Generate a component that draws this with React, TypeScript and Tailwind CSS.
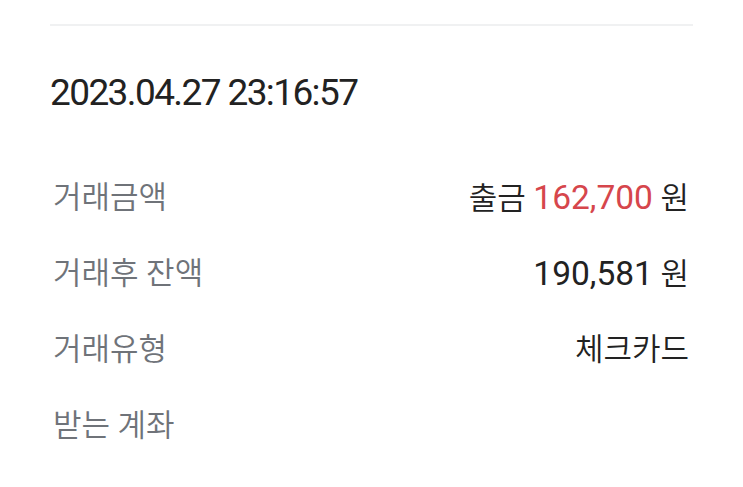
import React from "react";

const Num = ({ children, red }: { children: React.ReactNode; red?: boolean }) => (
  <span className={`font-normal text-[33.5px] ${red ? "text-[#d6464c]" : ""}`}>{children}</span>
);

const rows: { label: string; value: React.ReactNode }[] = [
  {
    label: "거래금액",
    value: (
      <>
        출금 <Num red>162,700</Num> 원
      </>
    ),
  },
  {
    label: "거래후 잔액",
    value: (
      <>
        <Num>190,581</Num> 원
      </>
    ),
  },
  { label: "거래유형", value: <>체크카드</> },
  { label: "받는 계좌", value: null },
];

export default function App() {
  return (
    <div
      className="w-[743px] h-[487px] bg-white overflow-hidden"
      style={{ fontFamily: "Roboto, 'Noto Sans CJK KR', sans-serif" }}
    >
      <div className="px-[50px] pt-[24px]">
        <div className="h-[2px] bg-[#f0f1f2]" />
        <div className="mt-[45px] h-[44px] flex items-center text-[37px] leading-[44px] text-[#222] tracking-[-1.6px]">
          2023.04.27 23:16:57
        </div>
        <div className="mt-[45px] flex flex-col">
          {rows.map((r) => (
            <div key={r.label} className="h-[76px] flex items-center justify-between leading-[40px] font-[350] text-[31px]">
              <span className="text-[#6f7379] pl-[3px]">{r.label}</span>
              <span className="text-[#222] pr-[4px]">{r.value}</span>
            </div>
          ))}
        </div>
      </div>
    </div>
  );
}
